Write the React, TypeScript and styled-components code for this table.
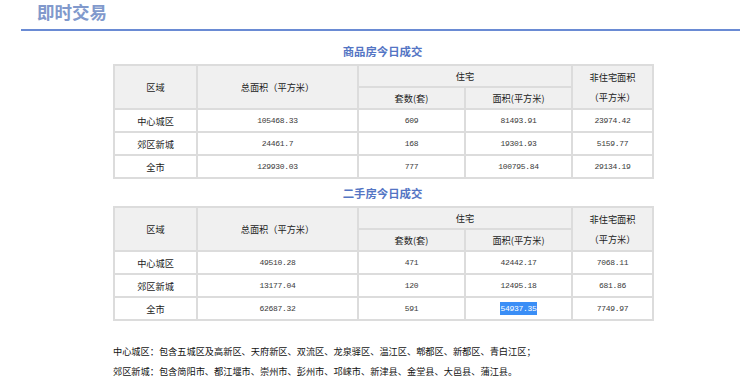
import styled, { createGlobalStyle } from "styled-components";

const GlobalStyle = createGlobalStyle`
  html, body {
    margin: 0;
    padding: 0;
    background: #ffffff;
  }
  body {
    font-family: "Noto Sans CJK SC", "Noto Sans", sans-serif;
    color: #222222;
  }
`;

const Page = styled.div`
  width: 740px;
  height: 389px;
  overflow: hidden;
`;

const Header = styled.div`
  margin-left: 21px;
  height: 29px;
  border-bottom: 2px solid #6a8bd4;
`;

const PageTitle = styled.h1`
  margin: 0;
  padding-left: 16px;
  font-size: 17.5px;
  line-height: 24px;
  font-weight: 700;
  color: #8199cc;
`;

const Content = styled.div`
  margin-left: 113px;
  width: 539px;
`;

const SectionTitle = styled.div<{ $first?: boolean }>`
  text-align: center;
  font-size: 11.4px;
  line-height: 14px;
  font-weight: 700;
  color: #5475c4;
  padding-top: ${(p) => (p.$first ? "13px" : "7px")};
  padding-bottom: 6px;
`;

const Table = styled.table`
  width: 539px;
  border-collapse: collapse;
  table-layout: fixed;
  border: 2px solid #dcdcdc;
`;

const HeadCell = styled.th`
  background: #f0f0f0;
  border: 2px solid #dcdcdc;
  font-weight: 400;
  font-size: 9.2px;
  line-height: 20px;
  height: 20px;
  padding: 0;
  text-align: center;
  color: #222222;
`;

const Cell = styled.td<{ $num?: boolean }>`
  border: 2px solid #dcdcdc;
  height: 21px;
  padding: 0;
  text-align: center;
  font-size: ${(p) => (p.$num ? "8px" : "9.2px")};
  font-family: ${(p) =>
    p.$num
      ? `"Liberation Mono", "DejaVu Sans Mono", monospace`
      : `"Noto Sans CJK SC", sans-serif`};
  letter-spacing: ${(p) => (p.$num ? "-0.3px" : "0")};
  color: ${(p) => (p.$num ? "#3a3a3a" : "#222222")};
`;

const Selected = styled.span`
  background: #3a8ef6;
  color: #ffffff;
  padding: 2px 0;
`;

const Notes = styled.div`
  margin-top: 20px;
  font-size: 9.2px;
  line-height: 20px;
  color: #111111;
`;

type Row = {
  area: string;
  total: string;
  units: string;
  resArea: string;
  other: string;
  selected?: boolean;
};

const newHomes: Row[] = [
  { area: "中心城区", total: "105468.33", units: "609", resArea: "81493.91", other: "23974.42" },
  { area: "郊区新城", total: "24461.7", units: "168", resArea: "19301.93", other: "5159.77" },
  { area: "全市", total: "129930.03", units: "777", resArea: "100795.84", other: "29134.19" },
];

const resale: Row[] = [
  { area: "中心城区", total: "49510.28", units: "471", resArea: "42442.17", other: "7068.11" },
  { area: "郊区新城", total: "13177.04", units: "120", resArea: "12495.18", other: "681.86" },
  { area: "全市", total: "62687.32", units: "591", resArea: "54937.35", other: "7749.97", selected: true },
];

const DealTable = ({ rows }: { rows: Row[] }) => (
  <Table>
    <colgroup>
      <col style={{ width: 83 }} />
      <col style={{ width: 161 }} />
      <col style={{ width: 107 }} />
      <col style={{ width: 107 }} />
      <col style={{ width: 81 }} />
    </colgroup>
    <thead>
      <tr>
        <HeadCell rowSpan={2}>区域</HeadCell>
        <HeadCell rowSpan={2}>总面积（平方米）</HeadCell>
        <HeadCell colSpan={2}>住宅</HeadCell>
        <HeadCell rowSpan={2}>
          非住宅面积
          <br />
          （平方米）
        </HeadCell>
      </tr>
      <tr>
        <HeadCell>套数(套)</HeadCell>
        <HeadCell>面积(平方米)</HeadCell>
      </tr>
    </thead>
    <tbody>
      {rows.map((r) => (
        <tr key={r.area}>
          <Cell>{r.area}</Cell>
          <Cell $num>{r.total}</Cell>
          <Cell $num>{r.units}</Cell>
          <Cell $num>{r.selected ? <Selected>{r.resArea}</Selected> : r.resArea}</Cell>
          <Cell $num>{r.other}</Cell>
        </tr>
      ))}
    </tbody>
  </Table>
);

export default function App() {
  return (
    <Page>
      <GlobalStyle />
      <Header>
        <PageTitle>即时交易</PageTitle>
      </Header>
      <Content>
        <SectionTitle $first>商品房今日成交</SectionTitle>
        <DealTable rows={newHomes} />
        <SectionTitle>二手房今日成交</SectionTitle>
        <DealTable rows={resale} />
        <Notes>
          <div>中心城区：包含五城区及高新区、天府新区、双流区、龙泉驿区、温江区、郫都区、新都区、青白江区；</div>
          <div>郊区新城：包含简阳市、都江堰市、崇州市、彭州市、邛崃市、新津县、金堂县、大邑县、蒲江县。</div>
        </Notes>
      </Content>
    </Page>
  );
}
